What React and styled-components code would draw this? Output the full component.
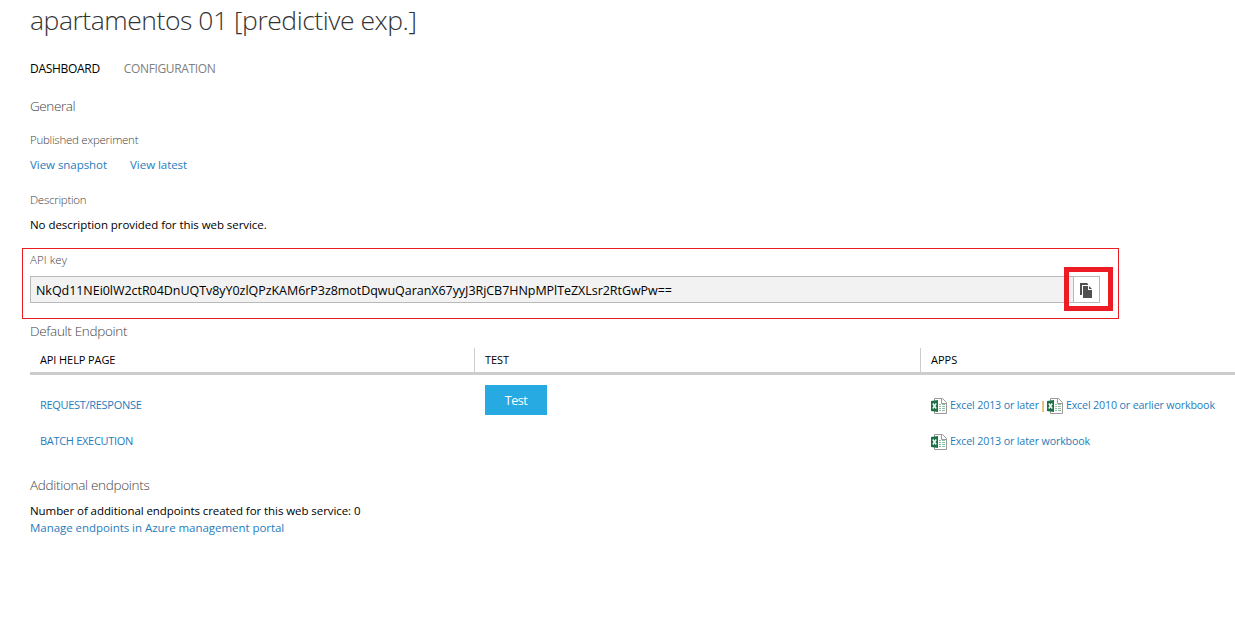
import React from "react";
import styled, { createGlobalStyle } from "styled-components";

const GlobalStyle = createGlobalStyle`
  *, *::before, *::after { box-sizing: border-box; }
  body {
    margin: 0;
    background: #fff;
    color: #000;
    font-family: "Segoe UI", "Open Sans", "Noto Sans", sans-serif;
    font-size: 11.5px;
    overflow: hidden;
  }
`;

const Page = styled.main`
  display: flex;
  flex-direction: column;
  width: 1235px;
  height: 622px;
  padding-left: 30px;
  white-space: nowrap;
`;

const Title = styled.h1`
  margin: 1px 0 0;
  font-size: 26.5px;
  font-weight: 300;
  line-height: 39px;
  letter-spacing: -0.46px;
  color: #333;
`;

const Tabs = styled.nav`
  display: flex;
  gap: 24px;
  margin-top: 19px;
  font-size: 12px;
  line-height: 20px;
`;

const Tab = styled.a`
  color: ${(p) => (p.$active ? "#000" : "#808080")};
  letter-spacing: ${(p) => p.$spacing}px;
`;

const SectionTitle = styled.h2`
  margin: ${(p) => p.$top}px 0 0;
  font-size: 13.5px;
  font-weight: 300;
  line-height: 20px;
  letter-spacing: ${(p) => p.$spacing || -0.31}px;
  color: #444;
`;

const Label = styled.h3`
  margin: ${(p) => p.$top || 0}px 0 0;
  font-size: 11.5px;
  font-weight: 300;
  line-height: 20px;
  letter-spacing: ${(p) => p.$spacing}px;
  color: #444;
`;

const Links = styled.div`
  display: flex;
  gap: 23px;
  margin-top: 5px;
`;

const Link = styled.a`
  color: #1f7dbd;
  line-height: ${(p) => p.$line || 20}px;
  letter-spacing: -0.045px;
`;

const Text = styled.p`
  margin: ${(p) => p.$top}px 0 0;
  line-height: ${(p) => p.$line || 20}px;
  letter-spacing: ${(p) => p.$spacing}px;
`;

const KeyFrame = styled.section`
  position: relative;
  width: 1097px;
  height: 71px;
  margin: 13px 0 0 -8px;
  padding: 1px 0 0 7px;
  border: 1px solid #ed1c24;
`;

const KeyRow = styled.div`
  display: flex;
  margin-top: 6px;
`;

const KeyField = styled.div`
  width: 1043px;
  height: 27px;
  padding-left: 5px;
  border: 1px solid #b9b9b9;
  border-right: 0;
  background: #f2f2f2;
  font-size: 12.5px;
  line-height: 27px;
  letter-spacing: -0.045px;
`;

const CopyButton = styled.button`
  display: flex;
  width: 27px;
  height: 27px;
  padding: 6px 0 0 6px;
  border: 1px solid #b9b9b9;
  background: #fff;
`;

const Highlight = styled.div`
  position: absolute;
  top: 18px;
  right: 5px;
  width: 49px;
  height: 44px;
  border: 5px solid #ed1c24;
`;

const Table = styled.div`
  display: grid;
  grid-template-columns: 444px 446px 315px;
  grid-template-rows: 27px 48px 36px;
  margin-top: 7px;
  font-size: 11px;
`;

const HeadCell = styled.div`
  display: flex;
  border-bottom: 3px solid #ccc;
  line-height: 24px;
  letter-spacing: ${(p) => p.$spacing || 0}px;

  & > span {
    padding-left: 10px;
    border-left: ${(p) => (p.$divided ? "1px solid #ccc" : "0")};
  }
`;

const Cell = styled.div`
  display: flex;
  align-items: flex-start;
  padding: ${(p) => p.$top}px 0 0 ${(p) => p.$left}px;
  line-height: 20px;
`;

const HelpLink = styled(Link)`
  letter-spacing: -0.3px;
`;

const TestButton = styled.button`
  width: 62px;
  height: 30px;
  padding: 1px 0 0;
  border: 0;
  background: #27a9e1;
  color: #fff;
  font: 12.5px/29px "Segoe UI", "Open Sans", sans-serif;
  letter-spacing: -0.4px;
`;

const AppLink = styled.a`
  display: flex;
  gap: 3px;
  color: #1f7dbd;
  font-size: 10.7px;
  letter-spacing: -0.15px;

  svg {
    margin-top: 3px;
  }
`;

const Divider = styled.span`
  width: 8px;
  padding-left: 1px;
  color: #8a6d3b;
`;

const CopyIcon = () => (
  <svg width="13" height="15" viewBox="0 0 13 15" fill="#505050">
    <path d="M0 0H7L8 1V2H2V12H0Z" />
    <path d="M3 3H8V7H12V15H3Z" />
    <path d="M9 3L12 6H9Z" />
  </svg>
);

const ExcelIcon = () => (
  <svg width="16" height="16" viewBox="0 0 16 16" fill="none">
    <path d="M3.5 .5H11.5L15.5 4.5V15.5H3.5Z" fill="#fff" stroke="#9a9a9a" />
    <path d="M10.5 .5V5.5H15.5" stroke="#9a9a9a" />
    <path d="M8 6.5H10M11 6.5H14M8 8.5H10M11 8.5H14M8 10.5H10M11 10.5H14M8 12.5H10M11 12.5H14" stroke="#8fc0a3" />
    <path d="M0 3L7 2V14L0 13Z" fill="#1e7145" />
    <path d="M1.8 5.5L5.2 10.5M5.2 5.5L1.8 10.5" stroke="#fff" strokeWidth="1.4" />
  </svg>
);

const ExcelLink = ({ children }) => (
  <AppLink>
    <ExcelIcon />
    <span>{children}</span>
  </AppLink>
);

export default function App() {
  return (
    <>
      <GlobalStyle />
      <Page>
        <Title>apartamentos 01 [predictive exp.]</Title>
        <Tabs>
          <Tab $active $spacing={-0.3}>DASHBOARD</Tab>
          <Tab $spacing={-0.36}>CONFIGURATION</Tab>
        </Tabs>

        <SectionTitle $top={17} $spacing={-0.42}>General</SectionTitle>
        <Label $top={14} $spacing={-0.25}>Published experiment</Label>
        <Links>
          <Link>View snapshot</Link>
          <Link>View latest</Link>
        </Links>
        <Label $top={15} $spacing={-0.25}>Description</Label>
        <Text $top={5} $spacing={-0.055}>No description provided for this web service.</Text>

        <KeyFrame>
          <Label $spacing={0.05}>API key</Label>
          <KeyRow>
            <KeyField>
              NkQd11NEi0lW2ctR04DnUQTv8yY0zlQPzKAM6rP3z8motDqwuQaranX67yyJ3RjCB7HNpMPlTeZXLsr2RtGwPw==
            </KeyField>
            <CopyButton aria-label="Copy">
              <CopyIcon />
            </CopyButton>
          </KeyRow>
          <Highlight />
        </KeyFrame>

        <SectionTitle $top={2}>Default Endpoint</SectionTitle>
        <Table>
          <HeadCell $spacing={-0.1}><span>API HELP PAGE</span></HeadCell>
          <HeadCell $divided $spacing={-0.1}><span>TEST</span></HeadCell>
          <HeadCell $divided><span>APPS</span></HeadCell>

          <Cell $top={20} $left={10}><HelpLink>REQUEST/RESPONSE</HelpLink></Cell>
          <Cell $top={10} $left={11}><TestButton>Test</TestButton></Cell>
          <Cell $top={20} $left={11}>
            <ExcelLink>Excel 2013 or later</ExcelLink>
            <Divider>|</Divider>
            <ExcelLink>Excel 2010 or earlier workbook</ExcelLink>
          </Cell>

          <Cell $top={8} $left={10}><HelpLink>BATCH EXECUTION</HelpLink></Cell>
          <Cell />
          <Cell $top={8} $left={11}>
            <ExcelLink>Excel 2013 or later workbook</ExcelLink>
          </Cell>
        </Table>

        <SectionTitle $top={16}>Additional endpoints</SectionTitle>
        <Text $top={7} $line={17} $spacing={-0.07}>
          Number of additional endpoints created for this web service: 0
        </Text>
        <Link $line={17}>Manage endpoints in Azure management portal</Link>
      </Page>
    </>
  );
}
